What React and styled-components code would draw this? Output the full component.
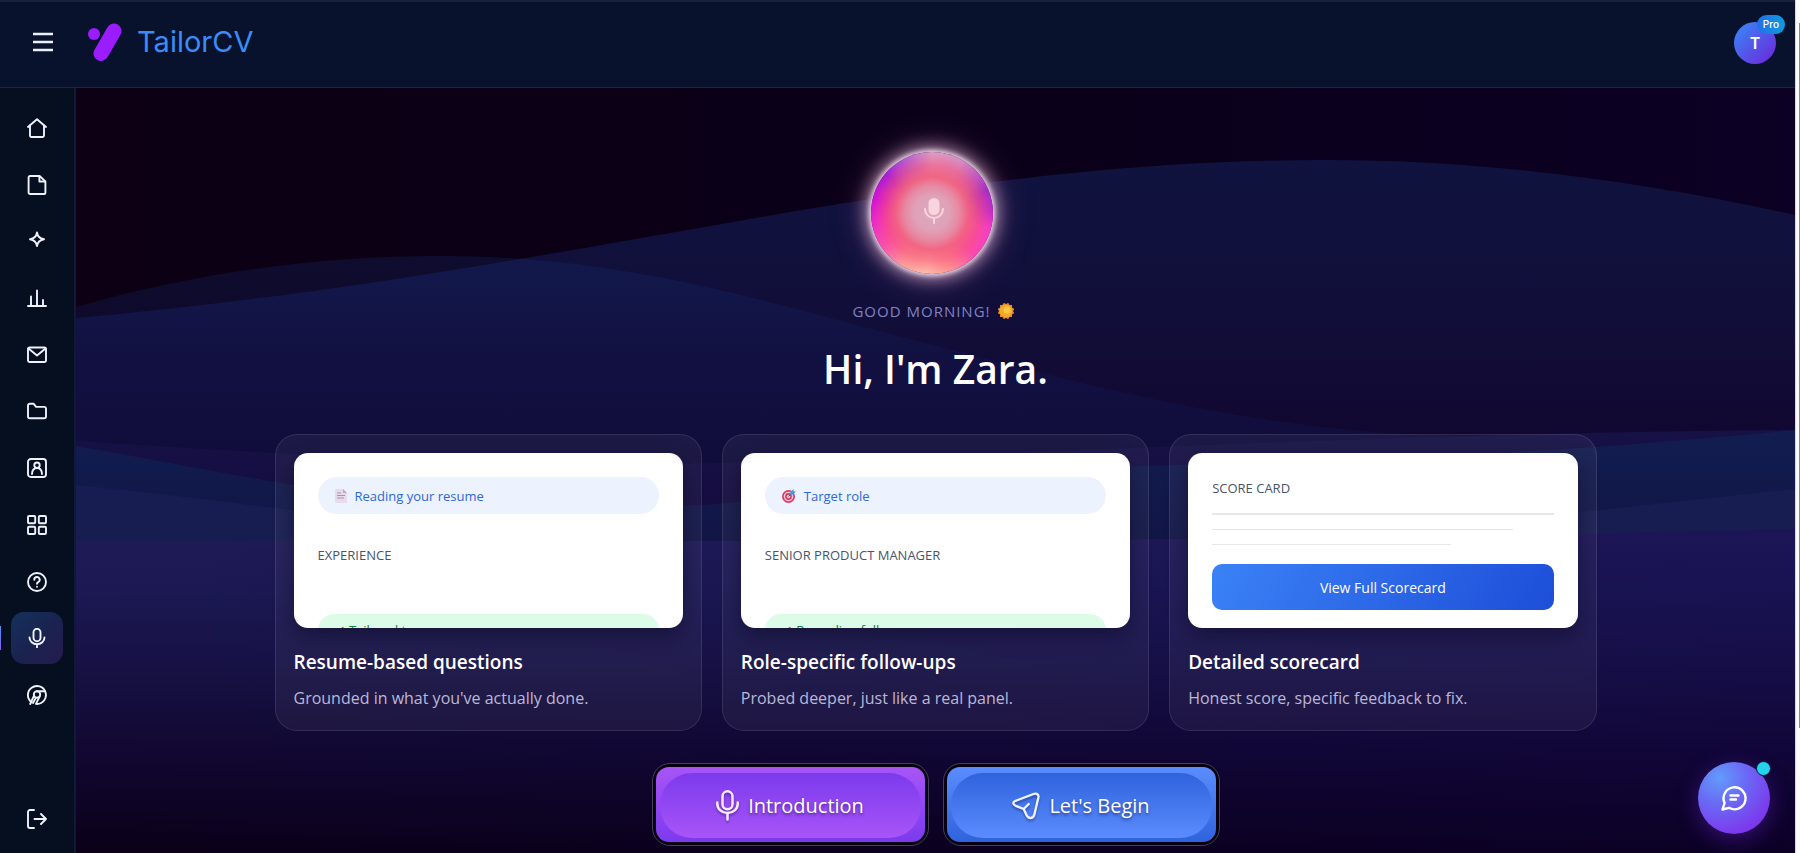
import React from "react";
import styled, { createGlobalStyle, css } from "styled-components";

const Global = createGlobalStyle`
  * { box-sizing: border-box; }
  html, body { margin: 0; background: #0b0018; }
  body { font-family: "Open Sans", "Noto Sans", sans-serif; color: #fff; }
  h1, h2, h3, p, ul { margin: 0; padding: 0; }
  button { font: inherit; color: inherit; border: 0; background: none; padding: 0; cursor: pointer; }
`;

const Page = styled.div`
  display: grid;
  grid-template-columns: minmax(0, 1fr) 5px;
  min-height: 100vh;
`;

const Shell = styled.div`
  display: grid;
  grid-template-rows: 88px 1fr;
  min-width: 0;
`;

const Rail = styled.div`
  display: flex;
  justify-content: flex-end;
  padding: 23px 0 125px;
  background: #fbfafd;
  border-left: 1px solid #d9d7e4;
`;

const RailThumb = styled.div`
  width: 1px;
  background: #8a8a8a;
`;

const Header = styled.header`
  display: flex;
  align-items: center;
  padding: 0 19px 4px 27px;
  background: #08122d;
  border-top: 2px solid #172139;
  border-bottom: 1px solid #1a2540;
`;

const MenuButton = styled.button`
  display: grid;
  place-items: center;
  width: 32px;
  height: 32px;
  margin-bottom: 2px;
`;

const Brand = styled.a`
  display: flex;
  align-items: center;
  gap: 14px;
  margin: 0 0 2px 28px;
  color: #3b8cf8;
  font: 400 29px/40px Inter, sans-serif;
  text-decoration: none;
`;

const Account = styled.button`
  position: relative;
  display: grid;
  place-items: center;
  width: 42px;
  height: 42px;
  margin-left: auto;
  border-radius: 50%;
  background: linear-gradient(135deg, #3b82f6 10%, #6d28d9 95%);
  color: #fff;
  font-family: Inter, sans-serif;
  font-size: 16px;
  font-weight: 600;
`;

const ProBadge = styled.span`
  position: absolute;
  top: -7px;
  right: -9px;
  padding: 0 6px;
  border-radius: 10px;
  background: linear-gradient(90deg, #2270e4, #0e9bdf);
  font-size: 10px;
  font-weight: 500;
  line-height: 19px;
`;

const Body = styled.div`
  display: grid;
  grid-template-columns: 76px minmax(0, 1fr);
`;

const Sidebar = styled.nav`
  display: flex;
  flex-direction: column;
  align-items: center;
  justify-content: space-between;
  padding: 14px 0 8px;
  background: #050f20;
  border-right: 2px solid #101a35;
`;

const NavList = styled.ul`
  display: flex;
  flex-direction: column;
  justify-content: space-between;
  min-height: 619px;
  list-style: none;
`;

const NavLink = styled.a`
  position: relative;
  display: grid;
  place-items: center;
  width: 52px;
  height: 52px;
  border-radius: 13px;
  color: #eef2fb;
  ${(p) =>
    p.$active &&
    css`
      background: linear-gradient(135deg, #14315c, #1a2350 50%, #251a4f);
      &::before {
        content: "";
        position: absolute;
        left: -11px;
        top: 14px;
        width: 1px;
        height: 24px;
        background: linear-gradient(#4b93f0, #8b5cf6);
      }
    `}
`;

const Main = styled.main`
  position: relative;
  isolation: isolate;
  display: flex;
  flex-direction: column;
  align-items: center;
  padding: 64px 24px 6px;
  overflow: hidden;
`;

const Backdrop = styled.svg`
  position: absolute;
  inset: 0;
  z-index: -1;
  width: 100%;
  height: 100%;
`;

const Orb = styled.div`
  display: grid;
  place-items: center;
  width: 122px;
  height: 122px;
  padding: 0 0 4px 4px;
  margin-right: 8px;
  border-radius: 50%;
  background:
    radial-gradient(circle closest-side, #dba9bd 0, #dfa2b8 28%, #e78aa4 44%, rgba(242, 98, 128, 0.95) 60%, rgba(248, 84, 120, 0.55) 78%, rgba(250, 80, 130, 0) 98%),
    conic-gradient(from 0deg, #dc9cc4 0deg, #d68cc4 30deg, #a52cc8 68deg, #c42cc8 88deg, #f53cc8 105deg, #fb48b0 135deg, #fd8f92 160deg, #fdbcaa 185deg, #fc9c9c 210deg, #fa50b0 235deg, #ee28cc 260deg, #d010d8 285deg, #a81cd8 310deg, #b860d0 335deg, #dc9cc4 360deg);
  box-shadow:
    0 0 5px 2px rgba(245, 225, 238, 0.9),
    0 0 16px 6px rgba(238, 195, 222, 0.6),
    0 0 36px 6px rgba(200, 110, 180, 0.3);
`;

const Greeting = styled.p`
  display: flex;
  align-items: center;
  gap: 7px;
  margin: 25px 5px 0 0;
  color: #8182c0;
  font-size: 15px;
  line-height: 24px;
  letter-spacing: 1px;
`;

const Headline = styled.h1`
  margin-top: 18px;
  font-size: 39px;
  font-weight: 600;
  line-height: 56px;
`;

const Features = styled.div`
  display: grid;
  grid-template-columns: repeat(3, minmax(0, 1fr));
  gap: 20px;
  width: 100%;
  max-width: 1322px;
  margin-top: 37px;
`;

const Card = styled.article`
  padding: 18px 18px 20px;
  border: 1px solid rgba(255, 255, 255, 0.1);
  border-radius: 22px;
  background: rgba(255, 255, 255, 0.05);
`;

const Preview = styled.div`
  height: 175px;
  padding: 24px;
  overflow: hidden;
  border-radius: 14px;
  background: #fff;
  box-shadow: 0 8px 20px rgba(8, 4, 30, 0.45);
`;

const Pill = styled.div`
  display: flex;
  align-items: center;
  gap: 8px;
  height: 37px;
  padding: 0 17px;
  border-radius: 19px;
  background: #edf2ff;
  color: #2f68d8;
  font-size: 13px;
`;

const DonePill = styled(Pill)`
  height: 32px;
  background: #dcfce7;
  color: #15803d;
  line-height: 18px;
`;

const Label = styled.p`
  margin: ${(p) => (p.$first ? "0 0 14px" : "30px 0 48px")};
  color: #475569;
  font-size: 13px;
  line-height: 22px;
`;

const ScoreLine = styled.div`
  width: ${(p) => p.$width};
  height: ${(p) => (p.$strong ? "2px" : "1px")};
  margin-bottom: 14px;
  background: #e5e7eb;
`;

const ScoreButton = styled.button`
  width: 100%;
  height: 46px;
  margin-top: 5px;
  border-radius: 10px;
  background: linear-gradient(120deg, #3b82f6, #1d4ed8);
  color: #fff;
  font-size: 14px;
  font-weight: 500;
`;

const CardTitle = styled.h2`
  margin-top: 20px;
  font-size: 19px;
  font-weight: 600;
  line-height: 28px;
`;

const CardText = styled.p`
  margin-top: 10px;
  color: #bab8d8;
  font-size: 16px;
  line-height: 24px;
`;

const Actions = styled.div`
  display: flex;
  flex-wrap: wrap;
  justify-content: center;
  gap: 14px;
  margin-top: 32px;
`;

const ActionFrame = styled.div`
  padding: 3px;
  border: 1px solid #454059;
  border-radius: 18px;
  background: #060010;
`;

const ActionButton = styled.button`
  display: block;
  width: 269px;
  height: 75px;
  padding: 6px 4px 4px;
  border-radius: 13px;
  background: linear-gradient(${(p) => p.$light}, ${(p) => p.$dark});
`;

const ActionFace = styled.span`
  display: flex;
  align-items: center;
  justify-content: center;
  gap: 9px;
  height: 100%;
  border-radius: 32px;
  background: linear-gradient(${(p) => p.$dark}, ${(p) => p.$light});
  color: #fff;
  font-size: 20px;
  text-shadow: 0 2px 3px rgba(20, 10, 60, 0.5);
  svg { filter: drop-shadow(0 2px 1px rgba(20, 10, 60, 0.4)); }
`;

const ChatButton = styled.button`
  position: fixed;
  right: 30px;
  bottom: 19px;
  display: grid;
  place-items: center;
  width: 72px;
  height: 72px;
  border-radius: 50%;
  background: radial-gradient(circle at 30% 22%, #629bfb 0, #6a6af5 35%, #7c3aed 75%, #7a30e0 100%);
  box-shadow: 0 6px 22px rgba(110, 40, 220, 0.4);
`;

const ChatDot = styled.span`
  position: absolute;
  top: -1px;
  right: -1px;
  width: 15px;
  height: 15px;
  border: 1px solid #0b1030;
  border-radius: 50%;
  background: #22d3ee;
`;

const NAV = [
  { name: "Home", art: <><path d="M1 9 10 1.2 19 9" /><path d="M3 7.5V17.6A1.4 1.4 0 0 0 4.4 19h11.2a1.4 1.4 0 0 0 1.4-1.4V7.5" /></> },
  { name: "Documents", art: <><path d="M3 1h9.600L18.400 6.400v11a1.600 1.600 0 0 1-1.600 1.600H3.200a1.600 1.600 0 0 1-1.600-1.600V2.400A1.400 1.400 0 0 1 3 1z" /><path d="M12.400 1.500v5h5.500" /></> },
  { name: "Assistant", art: <path d="M10 1.500c.6 4.200 2.300 6 7 6.800-4.700.8-6.400 2.600-7 6.800-.6-4.200-2.300-6-7-6.800 4.700-.8 6.400-2.600 7-6.800z" /> },
  { name: "Analytics", art: <path d="M1 18h18M4 18V8.500M10 18V2.500M16 18v-6" /> },
  { name: "Mail", art: <><rect x="1" y="2.500" width="18" height="14.500" rx="1.800" /><path d="m1.500 3.500 8.500 7 8.500-7" /></> },
  { name: "Folders", art: <path d="M1 15.500v-11A1.800 1.800 0 0 1 2.800 2.700h3.700l2.600 3.200h8.100A1.800 1.800 0 0 1 19 7.700v7.800a1.800 1.800 0 0 1-1.800 1.800H2.800A1.800 1.800 0 0 1 1 15.500z" /> },
  { name: "Profile", art: <><rect x="1" y="1" width="18" height="18" rx="2.800" /><circle cx="10" cy="7.200" r="2.700" /><path d="M5 16c.2-3.600 2-6 5-6s4.800 2.400 5 6" /></> },
  { name: "Templates", art: <><rect x="1" y="1" width="7.200" height="7.200" rx="1" /><rect x="11.800" y="1" width="7.200" height="7.200" rx="1" /><rect x="1" y="11.800" width="7.200" height="7.200" rx="1" /><rect x="11.800" y="11.800" width="7.200" height="7.200" rx="1" /></> },
  { name: "Help", art: <><circle cx="10" cy="10" r="9" /><path d="M7.300 7.800a2.700 2.700 0 1 1 3.900 2.300c-.9.500-1.200.9-1.200 1.700" /><path d="M10 14.600v.1" /></> },
  { name: "Interview", active: true, art: <><rect x="6.500" y="0.800" width="7" height="12.400" rx="3.500" /><path d="M2.500 9.500a7.500 6.700 0 0 0 15 0M10 16.300V19.500" /></> },
  { name: "Browser extension", art: <><path d="M4.500 17.200A9 9 0 1 1 10 19" /><circle cx="10" cy="9.500" r="3.200" /><path d="M10 6.200h8M7 10.600 3.200 19M12.600 11.600 9 18.800M8.500 13.500 6 18" /></> },
];

const Icon = ({ children }) => (
  <svg width="20" height="20" viewBox="0 0 20 20" fill="none" stroke="currentColor" strokeWidth="1.900" strokeLinecap="round" strokeLinejoin="round" aria-hidden="true">
    {children}
  </svg>
);

const Waves = () => (
  <Backdrop viewBox="76 88 1719 765" preserveAspectRatio="none" aria-hidden="true">
    <defs>
      <linearGradient id="sky" x1="0" x2="1"><stop offset="0" stopColor="#0d0014" /><stop offset="0.5" stopColor="#0a0018" /><stop offset="1" stopColor="#0c0024" /></linearGradient>
      <linearGradient id="hillFar" gradientUnits="userSpaceOnUse" x1="0" x2="0" y1="160" y2="450"><stop offset="0" stopColor="#10133f" /><stop offset="0.5" stopColor="#110f3a" /><stop offset="1" stopColor="#110730" /></linearGradient>
      <linearGradient id="hillNear" gradientUnits="userSpaceOnUse" x1="0" x2="0" y1="256" y2="450"><stop offset="0" stopColor="#182c70" stopOpacity="0.280" /><stop offset="0.5" stopColor="#121c5c" stopOpacity="0.300" /><stop offset="1" stopColor="#101850" stopOpacity="0.340" /></linearGradient>
      <linearGradient id="mid" gradientUnits="userSpaceOnUse" x1="0" x2="0" y1="430" y2="550"><stop offset="0" stopColor="#161146" /><stop offset="1" stopColor="#140a3c" /></linearGradient>
      <linearGradient id="blue" gradientUnits="userSpaceOnUse" x1="0" x2="0" y1="430" y2="545"><stop offset="0" stopColor="#121d50" /><stop offset="1" stopColor="#111545" /></linearGradient>
      <linearGradient id="ground" gradientUnits="userSpaceOnUse" x1="0" x2="0" y1="530" y2="853"><stop offset="0" stopColor="#201b58" /><stop offset="0.200" stopColor="#1b1852" /><stop offset="0.420" stopColor="#171244" /><stop offset="0.700" stopColor="#110730" /><stop offset="1" stopColor="#0b0018" /></linearGradient>
      <linearGradient id="groundTint" x1="0" x2="1"><stop offset="0" stopColor="#0a0048" stopOpacity="0" /><stop offset="1" stopColor="#100050" stopOpacity="0.250" /></linearGradient>
    </defs>
    <rect x="76" y="88" width="1719" height="765" fill="url(#sky)" />
    <path d="M76 318C330 296 560 252 790 212 980 180 1150 160 1325 160c170 0 330 24 470 55V600H76z" fill="url(#hillFar)" />
    <path d="M76 307C200 272 320 256 440 256 640 256 790 310 936 346 1100 388 1250 430 1450 436c120 3 240 0 345-4V600H76z" fill="url(#hillNear)" />
    <path d="M76 441C300 455 520 470 760 462c360-12 700-30 1035-32V600H76z" fill="url(#mid)" />
    <path d="M76 446C300 485 460 530 760 500 1000 450 1300 480 1795 430V600H76z" fill="url(#blue)" />
    <path d="M76 485C280 505 430 535 650 541h500c230-4 440-30 645-52V600H76z" fill="#192055" fillOpacity="0.7" />
    <path d="M76 541H900C1200 540 1500 536 1795 529V853H76z" fill="url(#ground)" />
    <path d="M76 541H900C1200 540 1500 536 1795 529V853H76z" fill="url(#groundTint)" />
  </Backdrop>
);

const DocIcon = () => (
  <svg width="12" height="14" viewBox="0 0 12 14" aria-hidden="true">
    <path d="M0 0h8l4 4v10H0z" fill="#e8dcec" /><path d="M8 0v4h4z" fill="#b9a9c4" />
    <path d="M2 4h4M2 6.500h8M2 9h7" stroke="#a692b2" strokeWidth="1" />
  </svg>
);

const TargetIcon = () => (
  <svg width="14" height="14" viewBox="0 0 14 14" aria-hidden="true">
    <circle cx="6.500" cy="7.500" r="6.500" fill="#d63d63" /><circle cx="6.500" cy="7.500" r="4.800" fill="#f3c3d3" />
    <circle cx="6.500" cy="7.500" r="3.400" fill="#d63d63" /><circle cx="6.500" cy="7.500" r="1.800" fill="#f3c3d3" />
    <path d="m6.500 7.500 4-4" stroke="#47608f" strokeWidth="1" /><path d="M8.500 3 11.500 0v2.500H14L11 5.500H8.500z" fill="#399be6" />
  </svg>
);

const SunIcon = () => (
  <svg width="16" height="16" viewBox="0 0 16 16" aria-hidden="true">
    <g fill="#e8892c">{[0, 30, 60].map((a) => <rect key={a} x="2" y="2" width="12" height="12" transform={`rotate(${a} 8 8)`} />)}</g>
    <circle cx="8" cy="8" r="6.200" fill="#f5a92c" /><circle cx="9" cy="7" r="3.500" fill="#fdc93c" />
  </svg>
);

const Feature = ({ title, text, children }) => (
  <Card>
    <Preview>{children}</Preview>
    <CardTitle>{title}</CardTitle>
    <CardText>{text}</CardText>
  </Card>
);

const Action = ({ light, dark, icon, children }) => (
  <ActionFrame>
    <ActionButton $light={light} $dark={dark}>
      <ActionFace $light={light} $dark={dark}>{icon}{children}</ActionFace>
    </ActionButton>
  </ActionFrame>
);

export default function App() {
  return (
    <Page>
      <Global />
      <Shell>
        <Header>
          <MenuButton aria-label="Menu">
            <svg width="20" height="20" viewBox="0 0 20 20" stroke="#e9effc" strokeWidth="2.300" aria-hidden="true"><path d="M0 2h20M0 10h20M0 18h20" /></svg>
          </MenuButton>
          <Brand href="#home">
            <svg width="36" height="40" viewBox="0 0 36 40" aria-hidden="true">
              <circle cx="7" cy="12" r="6" fill="#9a1cff" />
              <path d="m27 9-13 22.500" stroke="#9a1cff" strokeWidth="15" strokeLinecap="round" />
            </svg>
            TailorCV
          </Brand>
          <Account aria-label="Account">T<ProBadge>Pro</ProBadge></Account>
        </Header>
        <Body>
          <Sidebar aria-label="Main">
            <NavList>
              {NAV.map((n) => (
                <li key={n.name}>
                  <NavLink href="#" aria-label={n.name} $active={n.active}><Icon>{n.art}</Icon></NavLink>
                </li>
              ))}
            </NavList>
            <NavLink href="#" aria-label="Log out">
              <Icon><path d="M7 1H3a2 2 0 0 0-2 2v14a2 2 0 0 0 2 2h4M7.500 10H19M14 5l5 5-5 5" /></Icon>
            </NavLink>
          </Sidebar>
          <Main>
            <Waves />
            <Orb>
              <svg width="20" height="26" viewBox="0 0 20 26" fill="none" stroke="#f8d5de" strokeWidth="2" strokeLinecap="round" aria-hidden="true">
                <rect x="5.500" y="1" width="9" height="15" rx="4.500" fill="#f8d5de" /><path d="M1 11a9 9 0 0 0 18 0M10 20v5" />
              </svg>
            </Orb>
            <Greeting>GOOD MORNING! <SunIcon /></Greeting>
            <Headline>Hi, I'm Zara.</Headline>
            <Features>
              <Feature title="Resume-based questions" text="Grounded in what you've actually done.">
                <Pill><DocIcon />Reading your resume</Pill>
                <Label>EXPERIENCE</Label>
                <DonePill>✓ Tailored to you</DonePill>
              </Feature>
              <Feature title="Role-specific follow-ups" text="Probed deeper, just like a real panel.">
                <Pill><TargetIcon />Target role</Pill>
                <Label>SENIOR PRODUCT MANAGER</Label>
                <DonePill>✓ Recording follow-ups</DonePill>
              </Feature>
              <Feature title="Detailed scorecard" text="Honest score, specific feedback to fix.">
                <Label $first>SCORE CARD</Label>
                <ScoreLine $width="100%" $strong />
                <ScoreLine $width="88%" />
                <ScoreLine $width="70%" />
                <ScoreButton>View Full Scorecard</ScoreButton>
              </Feature>
            </Features>
            <Actions>
              <Action light="#a855f7" dark="#7c3aed" icon={<svg width="23" height="31" viewBox="0 0 23 31" fill="none" stroke="#fbeaff" strokeWidth="2.500" strokeLinecap="round" aria-hidden="true"><rect x="6.500" y="1.300" width="10" height="18" rx="5" /><path d="M1.300 12.500v1.500a10.200 9 0 0 0 20.400 0v-1.500M11.500 23.500v6" /></svg>}>Introduction</Action>
              <Action light="#5b8cff" dark="#2f63dc" icon={<svg width="28" height="28" viewBox="0 0 28 28" fill="none" stroke="#eef4ff" strokeWidth="2.400" strokeLinecap="round" strokeLinejoin="round" aria-hidden="true"><path d="M3.200 9 21.500 2c3.300-1.200 5.400.5 4.900 3.500L22.500 22c-1 5-6 5-7.800 1.500l-3-6.500L3.800 13.800C.4 12.300.8 10 3.200 9zM11.700 17l5-5" /></svg>}>Let's Begin</Action>
            </Actions>
          </Main>
        </Body>
      </Shell>
      <Rail><RailThumb /></Rail>
      <ChatButton aria-label="Open chat">
        <svg width="26" height="26" viewBox="0 0 26 26" fill="none" stroke="#fff" strokeWidth="2.400" strokeLinecap="round" strokeLinejoin="round" aria-hidden="true"><path d="M1.500 24.500 3.600 18A11 11 0 1 1 8 22.800zM9.500 10.500h8M9.500 14.500h5.500" /></svg>
        <ChatDot />
      </ChatButton>
    </Page>
  );
}
